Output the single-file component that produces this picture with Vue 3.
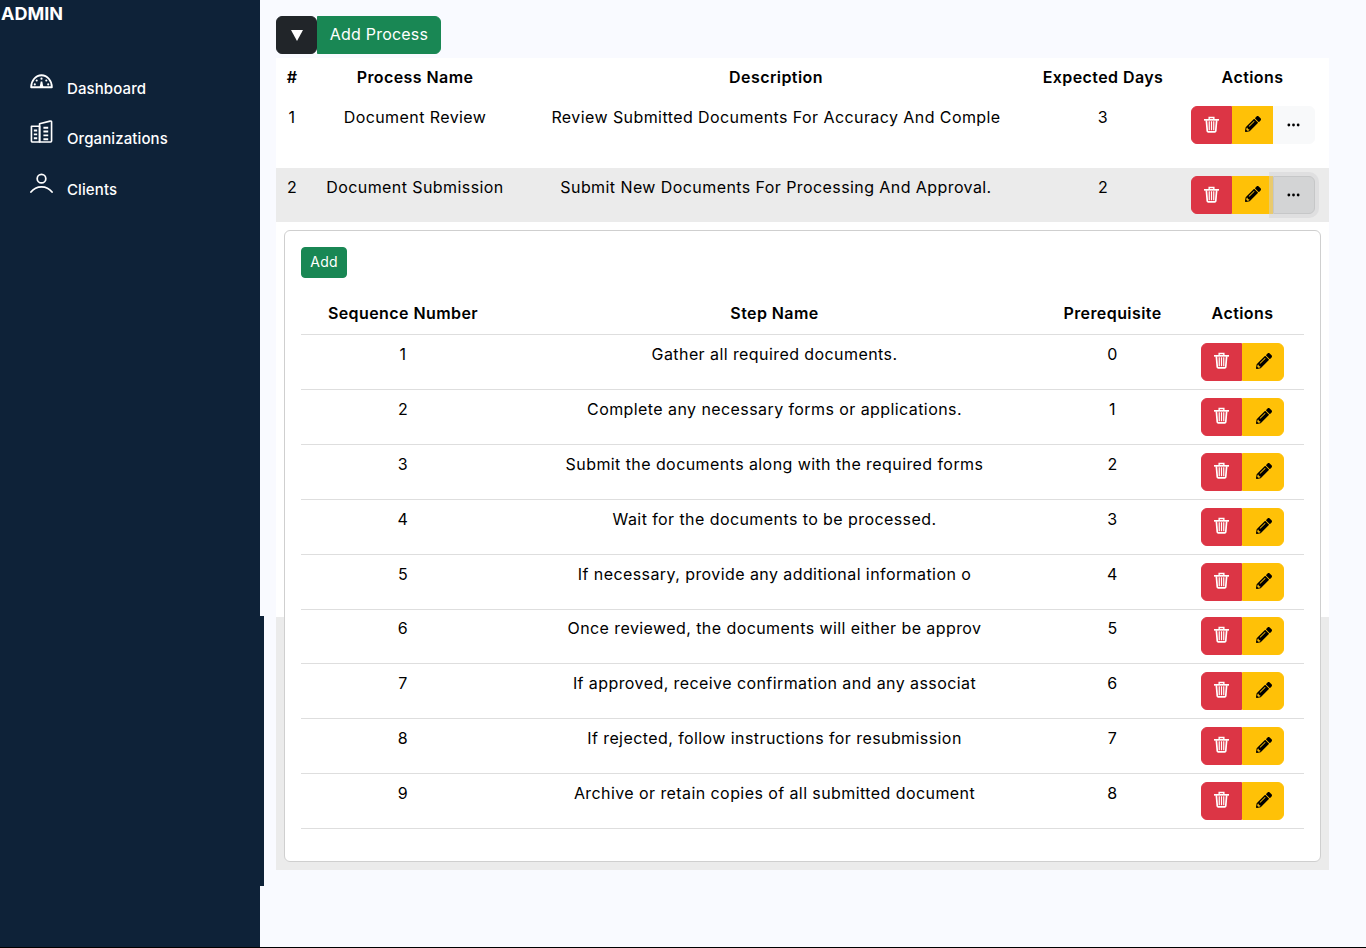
<script setup>
const processes = [
  { id: 1, name: 'Document Review', description: 'Review Submitted Documents For Accuracy And Comple', days: 3 },
  { id: 2, name: 'Document Submission', description: 'Submit New Documents For Processing And Approval.', days: 2 },
];

const steps = [
  { seq: 1, name: 'Gather all required documents.', prereq: 0 },
  { seq: 2, name: 'Complete any necessary forms or applications.', prereq: 1 },
  { seq: 3, name: 'Submit the documents along with the required forms', prereq: 2 },
  { seq: 4, name: 'Wait for the documents to be processed.', prereq: 3 },
  { seq: 5, name: 'If necessary, provide any additional information o', prereq: 4 },
  { seq: 6, name: 'Once reviewed, the documents will either be approv', prereq: 5 },
  { seq: 7, name: 'If approved, receive confirmation and any associat', prereq: 6 },
  { seq: 8, name: 'If rejected, follow instructions for resubmission', prereq: 7 },
  { seq: 9, name: 'Archive or retain copies of all submitted document', prereq: 8 },
];

const pencil = 'M497.9 142.1l-46.1 46.1c-4.7 4.7-12.3 4.7-17 0l-111-111c-4.7-4.7-4.7-12.3 0-17l46.1-46.1c18.7-18.7 49.1-18.7 67.9 0l60.1 60.1c18.8 18.7 18.8 49.1 0 67.9zM284.2 99.8L21.6 362.4.4 483.9c-2.9 16.4 11.4 30.6 27.8 27.8l121.5-21.3 262.6-262.6c4.7-4.7 4.7-12.3 0-17l-111-111c-4.8-4.7-12.4-4.7-17.1 0zM124.1 339.9c-5.5-5.5-5.5-14.3 0-19.8l154-154c5.5-5.5 14.3-5.5 19.8 0s5.5 14.3 0 19.8l-154 154c-5.5 5.5-14.3 5.5-19.8 0zM88 424h48v36.3l-64.5 11.3-31.1-31.1L51.7 376H88v48z';
</script>

<template>
  <div class="page">
    <aside class="sidebar">
      <div class="brand">ADMIN</div>
      <nav class="nav">
        <a class="nav-item">
          <svg class="nav-icon" viewBox="0 0 24 24" fill="none" stroke="currentColor" stroke-width="1.9">
            <path d="M1.200 18C1.200 11 6 5.500 12 5.500S22.800 11 22.800 18z" stroke-linejoin="round" />
            <path d="M10 18l1.200-6h1.600l1.200 6z" fill="currentColor" stroke="none" />
            <circle cx="12" cy="9" r="1.100" fill="currentColor" stroke="none" />
            <circle cx="7" cy="11" r="1.100" fill="currentColor" stroke="none" />
            <circle cx="17" cy="11" r="1.100" fill="currentColor" stroke="none" />
            <circle cx="5" cy="15" r="1.100" fill="currentColor" stroke="none" />
            <circle cx="19" cy="15" r="1.100" fill="currentColor" stroke="none" />
          </svg>
          <span>Dashboard</span>
        </a>
        <a class="nav-item">
          <svg class="nav-icon" viewBox="0 0 24 24" fill="none" stroke="currentColor" stroke-width="1.700">
            <path d="M1.500 6.500h8.500V23H2.500a1 1 0 0 1-1-1z" stroke-linejoin="round" />
            <path d="M10 4L21 1.200a1 1 0 0 1 1.500 1V22a1 1 0 0 1-1 1H10z" stroke-linejoin="round" />
            <path d="M4 11h3.500M4 15h3.500M4 19h3.500M14 8h5M14 12h5M14 16h5M14 20h5" stroke-width="2" />
          </svg>
          <span>Organizations</span>
        </a>
        <a class="nav-item">
          <svg class="nav-icon" viewBox="0 0 24 24" fill="none" stroke="currentColor" stroke-width="1.800">
            <circle cx="12" cy="8" r="4.500" />
            <path d="M1 22c3-4 7-5.500 11-5.500s8 1.500 11 5.500" stroke-linecap="round" />
          </svg>
          <span>Clients</span>
        </a>
      </nav>
    </aside>

    <main class="main">
      <div class="btn-group toolbar">
        <button class="btn btn-dark btn-toggle"><span class="tri"></span></button>
        <button class="btn btn-green"><span class="btn-label">Add Process</span></button>
      </div>

      <table class="process-table">
        <colgroup>
          <col class="c-num" /><col class="c-name" /><col class="c-desc" /><col class="c-days" /><col class="c-act" />
        </colgroup>
        <thead>
          <tr>
            <th>#</th>
            <th>Process Name</th>
            <th>Description</th>
            <th>Expected Days</th>
            <th>Actions</th>
          </tr>
        </thead>
        <tbody>
          <tr v-for="p in processes" :key="p.id" :class="['proc-row', { open: p.id === 2 }]">
            <td>{{ p.id }}</td>
            <td>{{ p.name }}</td>
            <td>{{ p.description }}</td>
            <td>{{ p.days }}</td>
            <td class="act">
              <div class="btn-group">
                <button class="btn btn-red">
                  <svg class="ico-trash" viewBox="0 0 16 17" fill="none" stroke="currentColor">
                    <path d="M0 3.500h16" stroke-width="1.800" />
                    <path d="M5.500 3V1h5v2" stroke-width="1.500" />
                    <path d="M2.500 4l1 11.500a1 1 0 0 0 1 .8h7a1 1 0 0 0 1-.8L13.500 4" stroke-width="1.800" />
                    <path d="M5.600 5v9.500M8 5v9.500M10.400 5v9.500" stroke-width="1.300" />
                  </svg>
                </button>
                <button class="btn btn-yellow">
                  <svg class="ico-pencil" viewBox="0 0 512 512"><path :d="pencil" fill="currentColor" /></svg>
                </button>
                <button :class="['btn', 'btn-light', { focused: p.id === 2 }]">
                  <svg class="ico-dots" viewBox="0 0 14 4"><circle cx="2" cy="2" r="1.500" /><circle cx="7" cy="2" r="1.500" /><circle cx="12" cy="2" r="1.500" /></svg>
                </button>
              </div>
            </td>
          </tr>
          <tr class="detail-row">
            <td colspan="5">
              <div class="card">
                <button class="btn btn-green btn-sm"><span class="btn-label">Add</span></button>
                <table class="step-table">
                  <colgroup>
                    <col class="s-seq" /><col class="s-name" /><col class="s-pre" /><col class="s-act" />
                  </colgroup>
                  <thead>
                    <tr>
                      <th>Sequence Number</th>
                      <th>Step Name</th>
                      <th>Prerequisite</th>
                      <th>Actions</th>
                    </tr>
                  </thead>
                  <tbody>
                    <tr v-for="s in steps" :key="s.seq">
                      <td>{{ s.seq }}</td>
                      <td>{{ s.name }}</td>
                      <td>{{ s.prereq }}</td>
                      <td class="act">
                        <div class="btn-group">
                          <button class="btn btn-red">
                            <svg class="ico-trash" viewBox="0 0 16 17" fill="none" stroke="currentColor">
                              <path d="M0 3.500h16" stroke-width="1.800" />
                              <path d="M5.500 3V1h5v2" stroke-width="1.500" />
                              <path d="M2.500 4l1 11.500a1 1 0 0 0 1 .8h7a1 1 0 0 0 1-.8L13.500 4" stroke-width="1.800" />
                              <path d="M5.600 5v9.500M8 5v9.500M10.400 5v9.500" stroke-width="1.300" />
                            </svg>
                          </button>
                          <button class="btn btn-yellow">
                            <svg class="ico-pencil" viewBox="0 0 512 512"><path :d="pencil" fill="currentColor" /></svg>
                          </button>
                        </div>
                      </td>
                    </tr>
                  </tbody>
                </table>
              </div>
            </td>
          </tr>
        </tbody>
      </table>
    </main>
  </div>
</template>

<style>
body {
  background: #000;
}
</style>

<style scoped>
.page {
  display: flex;
  height: 947px;
  background: #f9faff;
  font-family: Inter, "Liberation Sans", sans-serif;
  color: #000;
  font-size: 16px;
  overflow: hidden;
}

.sidebar {
  width: 260px;
  flex-shrink: 0;
  background: #0e2238;
  color: #fff;
}

.brand {
  font-size: 18px;
  font-weight: 700;
  line-height: 26px;
  padding-left: 1px;
  padding-top: 1px;
}

.nav {
  display: flex;
  flex-direction: column;
  padding: 25px 0 0 30px;
}

.nav-item {
  display: flex;
  align-items: flex-end;
  gap: 14px;
  height: 50.500px;
  font-size: 15px;
  font-weight: 500;
  letter-spacing: 0.1px;
}

.nav-icon {
  width: 23px;
  height: 23px;
  margin-bottom: 10px;
}

.nav-item span {
  line-height: 22px;
  margin-bottom: 3px;
}

.main {
  flex: 1;
  padding: 16px 37px 0 16px;
  /* 4px sliver of the sidebar that pokes out further down the page */
  background: linear-gradient(#0e2238, #0e2238) 0 616px / 4px 270px no-repeat;
}

.toolbar {
  display: flex;
  margin-bottom: 4px;
}

.btn-group {
  display: inline-flex;
  vertical-align: middle;
}

.btn {
  height: 38px;
  width: 41px;
  padding: 0;
  border: 1px solid transparent;
  font: inherit;
  display: inline-flex;
  align-items: center;
  justify-content: center;
  border-radius: 0;
  color: #fff;
}

.btn-label {
  padding-bottom: 2px;
  letter-spacing: 0.2px;
}

.btn-group .btn:first-child {
  border-top-left-radius: 6px;
  border-bottom-left-radius: 6px;
}

.btn-group .btn:last-child {
  width: 42px;
  border-top-right-radius: 6px;
  border-bottom-right-radius: 6px;
}

.btn-dark {
  background: #212529;
  border-color: #212529;
}

.btn-group .btn-toggle {
  border-radius: 6px;
}

.tri {
  width: 0;
  height: 0;
  border-left: 6px solid transparent;
  border-right: 6px solid transparent;
  border-top: 11px solid #fff;
}

.btn-green {
  background: #198754;
  border-color: #198754;
}

.toolbar .btn-green:last-child {
  width: 124px;
}

.btn-red {
  background: #dc3545;
  border-color: #dc3545;
}

.btn-yellow {
  background: #ffc107;
  border-color: #ffc107;
  color: #000;
}

.btn-light {
  background: #f8f9fa;
  border-color: #f8f9fa;
  color: #000;
}

.btn-light.focused {
  background: #d3d4d5;
  border-color: #c6c7c8;
  box-shadow: 0 0 0 4px rgba(211, 212, 213, 0.5);
  position: relative;
}

.btn-sm {
  height: 31px;
  width: 46px;
  font-size: 14px;
  border-radius: 4px;
  display: flex;
}

.ico-trash {
  width: 15px;
  height: 17px;
  margin-top: -2px;
}

.ico-pencil {
  width: 16px;
  height: 16px;
  margin-left: 1px;
  margin-top: -2px;
}

.ico-dots {
  width: 13px;
  height: 4px;
  fill: #000;
}

table {
  border-collapse: collapse;
  table-layout: fixed;
  text-align: center;
}

.process-table {
  width: 1053px;
  background: #fff;
}

.c-num { width: 32px; }
.c-name { width: 214px; }
.c-desc { width: 508px; }
.c-days { width: 146px; }
.c-act { width: 153px; }

th {
  font-weight: 600;
  padding: 0 0 2px;
  letter-spacing: 0.42px;
  box-sizing: border-box;
}

.process-table th {
  height: 40px;
}

td {
  padding: 0;
  letter-spacing: 0.42px;
  box-sizing: border-box;
}

.proc-row td {
  vertical-align: top;
  height: 70px;
  padding-top: 7px;
  line-height: 24px;
}

.proc-row td.act {
  padding-top: 8px;
}

.proc-row.open {
  background: #ebebeb;
}

.proc-row.open td {
  height: 54px;
}

.detail-row td {
  padding: 8px;
  /* row shading only shows below the panel's fold */
  background: linear-gradient(#fff 395px, #ebebeb 395px);
}

.card {
  border: 1px solid #cfcfcf;
  border-radius: 6px;
  background: #fff;
  padding: 16px 16px 32px;
  height: 632px;
  box-sizing: border-box;
}

.step-table {
  width: 1003px;
  margin-top: 16px;
}

.s-seq { width: 204px; }
.s-name { width: 539px; }
.s-pre { width: 137px; }
.s-act { width: 123px; }

.step-table th {
  height: 40px;
  border-bottom: 1px solid #dedede;
}

.step-table td {
  height: 55px;
  padding-top: 7px;
  vertical-align: top;
  line-height: 24px;
  border-bottom: 1px solid #dedede;
}

.step-table td.act {
  padding-top: 8px;
}

.step-table tbody tr:nth-child(6) td {
  height: 54px;
  padding-top: 6px;
}

.step-table tbody tr:nth-child(6) td.act {
  padding-top: 7px;
}
</style>
